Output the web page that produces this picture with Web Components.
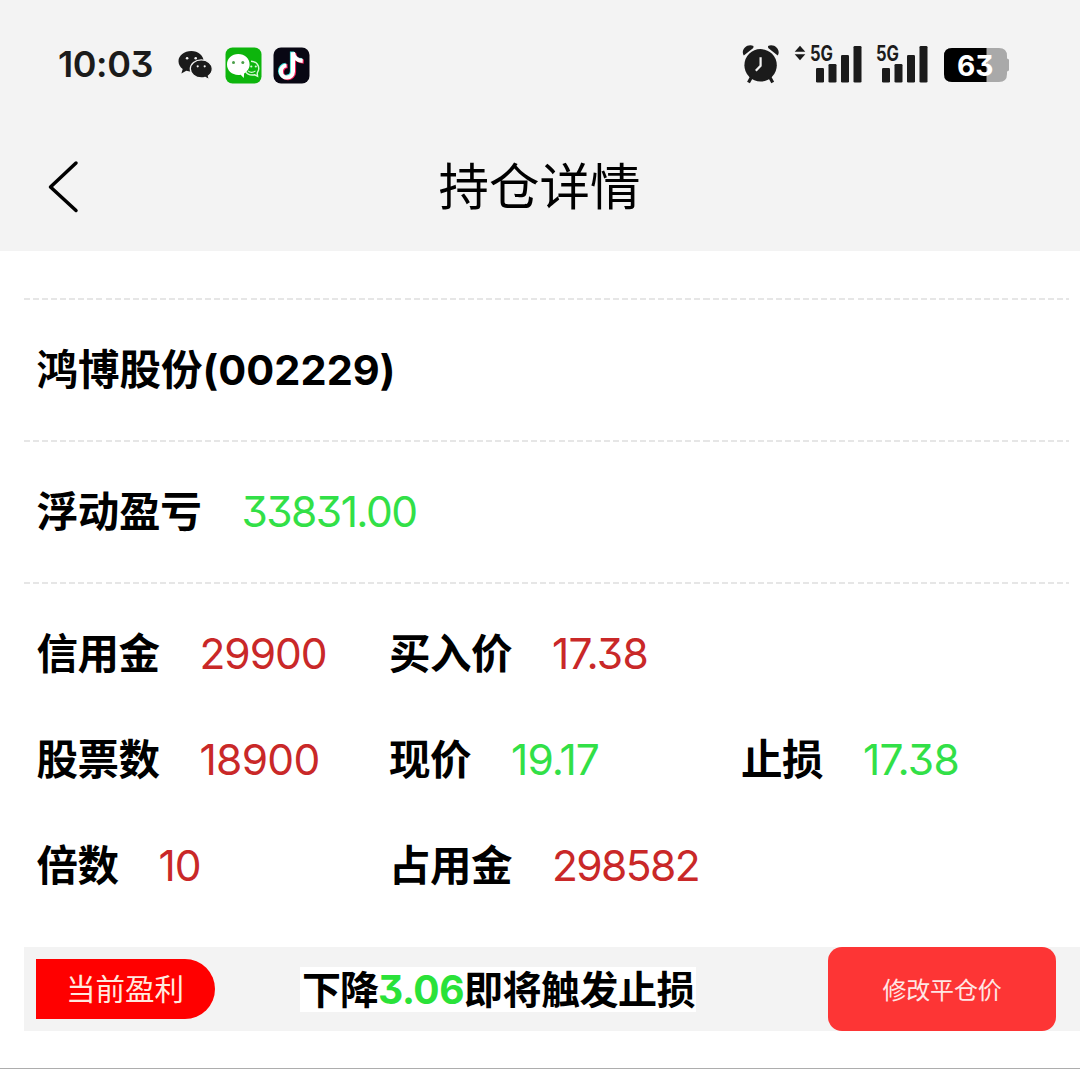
<!DOCTYPE html>
<html lang="zh-CN">
<head>
<meta charset="utf-8">
<title>持仓详情</title>
<style>
html,body{margin:0;padding:0;background:#fff}
body{width:1080px;height:1069px;overflow:hidden;font-family:Inter,"Noto Sans CJK SC",sans-serif;font-feature-settings:"cv09" 1;color:#000}
</style>
</head>
<body>
<position-page></position-page>
<script>
function define(name, html, setup){
  const tpl=document.createElement('template');
  tpl.innerHTML=html;
  customElements.define(name, class extends HTMLElement{
    connectedCallback(){
      if(this.shadowRoot) return;
      this.attachShadow({mode:'open'}).append(tpl.content.cloneNode(true));
      if(setup) setup(this,this.shadowRoot);
    }
  });
}

/* One line of text whose tracking is set so that it takes the width asked for. */
define('tracked-text',`<style>
:host{display:block;flex:none;white-space:nowrap;line-height:1.4}
span{display:inline-block}
</style><span><slot></slot></span>`,(el,root)=>{
  const w=parseFloat(el.getAttribute('w'));
  el.style.width=w+'px';
  const s=root.querySelector('span');
  s.style.letterSpacing=(w-s.getBoundingClientRect().width)/[...el.textContent].length+'px';
});

define('status-bar',`<style>
:host{display:flex;height:130px;box-sizing:border-box;padding:0 71px 0 58px;align-items:center;color:#1b1b1b}
.time{font-size:36px;font-weight:600;margin-right:25px;margin-top:-1px}
.spacer{flex:1}
svg{display:block;flex:none}
text{font-family:Inter,sans-serif}
.g{font-size:21px;font-weight:700}
</style>
<tracked-text class="time" w="95">10:03</tracked-text>
<svg width="36" height="36" viewBox="178 47 36 36" fill="#1b1b1b">
<path d="M191.300 51c-7 0-12.800 4.500-12.800 10.200 0 3.200 1.600 5.800 4.200 7.700l-1.300 4.600 4.900-2.700c1.500.4 3 .7 5 .7 6.800 0 12.300-4.500 12.300-10.300S198.200 51 191.300 51z"/>
<path d="M201.300 59.800c-6 0-11 4-11 9s5 9.200 11 9.200c1.400 0 2.700-.2 3.900-.6l4.300 2.500-1.100-3.900c2.400-1.700 3.900-4.200 3.900-7.200 0-5-5-9-11-9z" stroke="#f3f3f3" stroke-width="1.300"/>
<g fill="#f3f3f3"><circle cx="187.100" cy="58.300" r="1.300"/><circle cx="195.700" cy="58.300" r="1.300"/><circle cx="197.700" cy="66.300" r="1.100"/><circle cx="204.700" cy="66.300" r="1.100"/></g>
</svg>
<svg width="37" height="37" viewBox="224.500 46.500 37 37" style="margin-left:10.500px">
<rect x="225" y="47" width="36" height="36" rx="7" fill="#0db50c"/>
<path d="M250.500 60.800c6 .2 8.500 4.700 7.500 8.700-.5 1.600-1.300 2.700-1.300 3.200l.4 3-2.900-1.400c-4.800 1-9.300-1.200-9.600-5.600" fill="none" stroke="#d7fad4" stroke-width="1.400"/>
<path d="M237.800 53.500c-6.500 0-11.300 4.600-11.300 10.500 0 5.900 4.800 10.400 11.300 10.400.8 0 1.600-.1 2.400-.2l3.100 3.300.3-4.500c3.200-1.800 5.500-5.200 5.500-9 0-5.900-4.900-10.500-11.300-10.500z" fill="#fff"/>
<g fill="#4b9f4a"><circle cx="233" cy="62" r="1.500"/><circle cx="242.300" cy="62" r="1.500"/></g>
<g fill="#d7fad4"><circle cx="250.800" cy="66" r="1.100"/><circle cx="255.300" cy="66" r="1.100"/></g>
<path d="M247.500 70.400q3.500 3 7.500 0" stroke="#d7fad4" stroke-width="1.100" fill="none"/>
</svg>
<svg width="37" height="37" viewBox="272.500 46.500 37 37" style="margin-left:11px" fill="none" stroke-width="4.200">
<rect x="273" y="47" width="36" height="36" rx="7.500" fill="#080713"/>
<path d="M292 51.500v19.200a6 6 0 1 1-6.400-6M292 51.500c.5 5 4.400 8.300 9.800 8.600" stroke="#35ddd7" transform="translate(-.5 -.4)"/>
<path d="M292 51.500v19.200a6 6 0 1 1-6.400-6M292 51.500c.5 5 4.400 8.300 9.800 8.600" stroke="#f51d55" transform="translate(1.500 1)"/>
<path d="M292 51.500v19.200a6 6 0 1 1-6.400-6M292 51.500c.5 5 4.400 8.300 9.800 8.600" stroke="#fff" transform="translate(.4 .3)"/>
</svg>
<div class="spacer"></div>
<svg width="268" height="64" viewBox="741 33 268 64" fill="#1b1b1b">
<path d="M743.800 55.500c-3.500-4.800 2.800-12.500 9.700-9.500l-.2 2zM777.700 55.500c3.500-4.800-2.800-12.500-9.700-9.500l.2 2z"/>
<circle cx="760.600" cy="65.300" r="16.200"/>
<path d="M751.500 77l-3 5.500M769.700 77l3 5.500" stroke="#1b1b1b" stroke-width="3.200"/>
<path d="M760.600 57.200v8.500l-4.800 5" fill="none" stroke="#f3f3f3" stroke-width="2.200"/>
<path d="M800 45.800l5.300 6h-10.600zM800 60.300l5.300-6h-10.600z"/>
<text class="g" x="810" y="60.700" textLength="23" lengthAdjust="spacingAndGlyphs">5G</text>
<rect x="816" y="68" width="8" height="14.500" rx="1.300"/><rect x="828.500" y="64" width="8" height="18.500" rx="1.300"/><rect x="841" y="55" width="8" height="27.500" rx="1.300"/><rect x="853.500" y="46" width="8" height="36.500" rx="1.300"/>
<text class="g" x="876" y="60.700" textLength="23" lengthAdjust="spacingAndGlyphs">5G</text>
<rect x="882" y="68" width="8" height="14.500" rx="1.300"/><rect x="894.500" y="64" width="8" height="18.500" rx="1.300"/><rect x="907" y="55" width="8" height="27.500" rx="1.300"/><rect x="919.500" y="46" width="8" height="36.500" rx="1.300"/>
<path d="M952 48h47q8 0 8 8v2.500q2.300.3 2.300 2.500v8q0 2.200-2.300 2.500V74q0 8-8 8h-47q-8 0-8-8V56q0-8 8-8z" fill="#a9a9a9"/>
<path d="M952 48h34.500v34H952q-8 0-8-8V56q0-8 8-8z" fill="#000"/>
<text x="957" y="76" font-size="29" font-weight="700" fill="#fff" textLength="36.500" lengthAdjust="spacingAndGlyphs">63</text>
</svg>`);

define('nav-header',`<style>
:host{display:grid;grid-template-columns:120px 1fr 120px;height:121px;align-items:center}
svg{display:block;margin-left:46px;margin-top:-9px}
.title{justify-self:center;font-family:"Noto Sans CJK SC",sans-serif;font-size:50.5px;margin-top:-15px}
</style>
<svg width="34" height="54" viewBox="46 159 34 54"><path d="M76 163L50.500 187L76 210.500" fill="none" stroke="#000" stroke-width="3.500" stroke-linecap="round" stroke-linejoin="round"/></svg>
<tracked-text class="title" w="203"><slot></slot></tracked-text>`);

define('dash-rule',`<style>
:host{display:block;height:2px;margin:0 11px 0 24px;background:repeating-linear-gradient(90deg,#e6e6e6 0 6px,#fff 6px 9.060px)}
</style>`);

define('data-field',`<style>
:host{display:flex;align-items:center;gap:40px;font-size:41.500px;height:60px}
.l{font-weight:700}
.v{font-weight:380;color:#c92828;font-size:42.500px;margin-top:-1px}
:host([up]) .v{color:#32e047}
</style><tracked-text class="l"></tracked-text>`,(el,root)=>{
  const mk=(cls,txt,w,old)=>{
    const n=document.createElement('tracked-text');
    n.className=cls;n.setAttribute('w',w);n.textContent=txt;
    if(old) old.replaceWith(n); else root.append(n);
  };
  mk('l',el.getAttribute('label'),el.getAttribute('lw'),root.querySelector('.l'));
  if(el.hasAttribute('value')) mk('v',el.getAttribute('value'),el.getAttribute('vw'));
});

define('field-row',`<style>
:host{display:grid;grid-template-columns:352.5px 352px 1fr;height:106px;align-items:center;padding-left:36.5px}
</style><slot></slot>`);

define('profit-tag',`<style>
:host{display:flex;align-items:center;box-sizing:border-box;width:179px;height:60px;padding-left:30px;background:#f00;color:#ffe9df;border-radius:0 30px 30px 0;font:29.500px "Noto Sans CJK SC",sans-serif}
tracked-text{margin-top:-3px}
</style><tracked-text w="118">当前盈利</tracked-text>`);

define('action-button',`<style>
:host{display:flex;align-items:center;justify-content:center;width:228px;height:84px;border-radius:14px;background:#fd3535;color:#ffe6e4;font:24px "Noto Sans CJK SC",sans-serif}
</style><tracked-text w="119">修改平仓价</tracked-text>`);

define('stop-bar',`<style>
:host{display:flex;align-items:center;box-sizing:border-box;height:84px;margin-left:24px;padding:0 24px 0 12px;background:#f3f3f3}
.msg{display:flex;align-items:center;box-sizing:border-box;width:396px;height:45px;margin-left:85px;padding:3px 0 0 2px;background:#fff;font-size:39px;font-weight:700}
.n{color:#2ae239}
action-button{margin-left:auto}
</style>
<profit-tag></profit-tag>
<div class="msg"><tracked-text w="76">下降</tracked-text><tracked-text class="n" w="86">3.06</tracked-text><tracked-text w="231">即将触发止损</tracked-text></div>
<action-button></action-button>`);

define('position-page',`<style>
:host{display:flex;flex-direction:column;width:1080px;height:1069px;box-sizing:border-box;background:#fff;border-bottom:1px solid #adadad}
header{background:#f3f3f3;height:251px;margin-bottom:47px;flex:none}
.row{display:flex;align-items:center;height:140px;padding-left:36.5px}
section{flex:none;padding-top:17px;margin-bottom:28px}
</style>
<header><status-bar></status-bar><nav-header>持仓详情</nav-header></header>
<dash-rule></dash-rule>
<div class="row"><data-field label="鸿博股份(002229)" lw="359"></data-field></div>
<dash-rule></dash-rule>
<div class="row"><data-field up label="浮动盈亏" lw="165" value="33831.00" vw="175"></data-field></div>
<dash-rule></dash-rule>
<section>
<field-row><data-field label="信用金" lw="123" value="29900" vw="127"></data-field><data-field label="买入价" lw="123" value="17.38" vw="96"></data-field></field-row>
<field-row><data-field label="股票数" lw="123" value="18900" vw="120"></data-field><data-field up label="现价" lw="82" value="19.17" vw="88"></data-field><data-field up label="止损" lw="82" value="17.38" vw="96"></data-field></field-row>
<field-row><data-field label="倍数" lw="82" value="10" vw="42"></data-field><data-field label="占用金" lw="123" value="298582" vw="147"></data-field></field-row>
</section>
<stop-bar></stop-bar>`);
</script>
</body>
</html>
